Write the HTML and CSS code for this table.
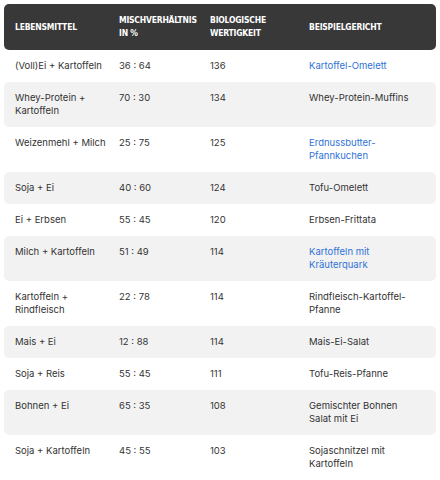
FILE: index.html
```html
<!DOCTYPE html>
<html lang="de">
<head>
<meta charset="utf-8">
<link rel="stylesheet" href="styles.css">
</head>
<body>
<table class="tbl">
  <colgroup>
    <col class="c1"><col class="c2"><col class="c3"><col class="c4">
  </colgroup>
  <thead>
    <tr>
      <th>Lebensmittel</th>
      <th>Mischverhältnis<br>in %</th>
      <th>Biologische<br>Wertigkeit</th>
      <th>Beispielgericht</th>
    </tr>
  </thead>
  <tbody>
    <tr><td>(Voll)Ei + Kartoffeln</td><td>36 : 64</td><td>136</td><td><a href="#">Kartoffel-Omelett</a></td></tr>
    <tr><td>Whey-Protein +<br>Kartoffeln</td><td>70 : 30</td><td>134</td><td>Whey-Protein-Muffins</td></tr>
    <tr><td>Weizenmehl + Milch</td><td>25 : 75</td><td>125</td><td><a href="#">Erdnussbutter-<br>Pfannkuchen</a></td></tr>
    <tr><td>Soja + Ei</td><td>40 : 60</td><td>124</td><td>Tofu-Omelett</td></tr>
    <tr><td>Ei + Erbsen</td><td>55 : 45</td><td>120</td><td>Erbsen-Frittata</td></tr>
    <tr><td>Milch + Kartoffeln</td><td>51 : 49</td><td>114</td><td><a href="#">Kartoffeln mit<br>Kräuterquark</a></td></tr>
    <tr><td>Kartoffeln +<br>Rindfleisch</td><td>22 : 78</td><td>114</td><td>Rindfleisch-Kartoffel-<br>Pfanne</td></tr>
    <tr><td>Mais + Ei</td><td>12 : 88</td><td>114</td><td>Mais-Ei-Salat</td></tr>
    <tr><td>Soja + Reis</td><td>55 : 45</td><td>111</td><td>Tofu-Reis-Pfanne</td></tr>
    <tr><td>Bohnen + Ei</td><td>65 : 35</td><td>108</td><td>Gemischter Bohnen<br>Salat mit Ei</td></tr>
    <tr><td>Soja + Kartoffeln</td><td>45 : 55</td><td>103</td><td>Sojaschnitzel mit<br>Kartoffeln</td></tr>
  </tbody>
</table>
</body>
</html>
```
FILE: styles.css
```css
html, body {
  margin: 0;
  background: #ffffff;
}
body {
  padding: 4px;
  font-family: Inter, "Noto Sans", sans-serif;
  font-size: 9.5px;
  color: #333333;
}
.tbl {
  width: 432px;
  border-collapse: separate;
  border-spacing: 0;
  table-layout: fixed;
}
.c1 { width: 104px; }
.c2 { width: 91px; }
.c3 { width: 99px; }
.c4 { width: 138px; }
.tbl th {
  background: #383838;
  color: #ffffff;
  font-family: "DejaVu Sans Condensed", "Liberation Sans Narrow", sans-serif;
  font-weight: bold;
  font-size: 8.5px;
  letter-spacing: -0.2px;
  line-height: 13px;
  text-transform: uppercase;
  text-align: left;
  vertical-align: middle;
  white-space: nowrap;
  padding: 10px 0 10px 11px;
}
.tbl th:first-child { border-radius: 5px 0 0 5px; }
.tbl th:last-child { border-radius: 0 5px 5px 0; }
.tbl td {
  line-height: 13px;
  vertical-align: top;
  white-space: nowrap;
  padding: 9px 0 10px 11px;
}
.tbl tbody tr:nth-child(even) td { background: #f2f2f2; }
.tbl tbody tr:nth-child(even) td:first-child { border-radius: 5px 0 0 5px; }
.tbl tbody tr:nth-child(even) td:last-child { border-radius: 0 5px 5px 0; }
.tbl a {
  color: #2f72d6;
  text-decoration: none;
}
```
